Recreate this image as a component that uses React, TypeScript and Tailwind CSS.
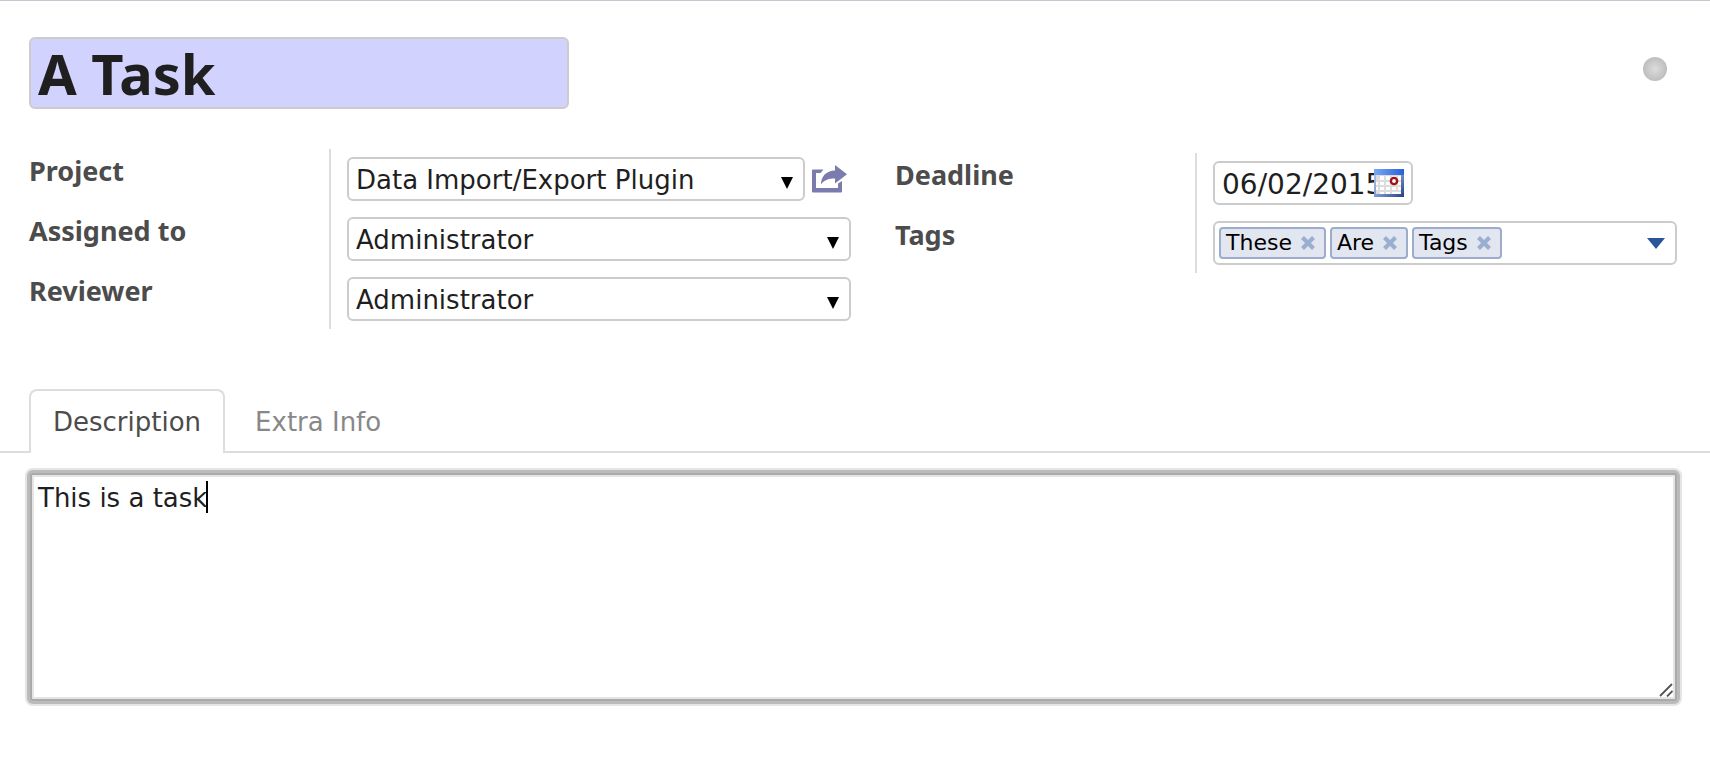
import type { ReactNode } from "react";

const FIELD = "h-11 rounded-md border-2 border-[#cccccc] bg-white leading-8 text-[#1f1f1f]";

function Row({ label, htmlFor, children }: { label: string; htmlFor: string; children: ReactNode }) {
  return (
    <div className="flex h-[60px]">
      <label
        htmlFor={htmlFor}
        className="w-[302px] shrink-0 border-r-2 border-[#dddddd] pt-1 font-['Noto_Sans',sans-serif] text-[27px] leading-9 font-bold text-[#4c4c4c]"
      >
        {label}
      </label>
      <div className="flex min-w-0 flex-1 items-center pl-4">{children}</div>
    </div>
  );
}

function Combo({ id, value }: { id: string; value: string }) {
  return (
    <div className="relative min-w-0 flex-1">
      <select id={id} className={`${FIELD} block w-full appearance-none pt-[2px] pl-[7px] text-[26px] outline-none`}>
        <option>{value}</option>
      </select>
      <svg className="pointer-events-none absolute top-5 right-3 h-3 w-3" viewBox="0 0 12 12" aria-hidden="true">
        <path d="M0 0h12L6 12z" fill="#000" />
      </svg>
    </div>
  );
}

function ShareIcon() {
  return (
    <svg className="h-7 w-9" viewBox="0 0 36 28" aria-hidden="true">
      <path d="M0 5.500Q0 4.500 1 4.500H11.500L8.500 8H4v15h22v-4.500l4-2.500v10.500q0 1-1 1H1q-1 0-1-1z" fill="#7c7bad" />
      <path d="M23 0 35 9.300 23 18.500v-5c-6 0-10.500 1-14 6C9 11.500 14 5.800 23 5.500z" fill="#7c7bad" />
    </svg>
  );
}

function CalendarIcon() {
  return (
    <svg className="h-7 w-[30px]" viewBox="0 0 30 28" aria-hidden="true">
      <defs>
        <linearGradient id="calendar-bar" x1="0" x2="1" y1="0" y2="0">
          <stop offset="0" stopColor="#77a8fb" />
          <stop offset="1" stopColor="#2b5fd8" />
        </linearGradient>
        <linearGradient id="calendar-edge" x1="0" x2="1" y1="0" y2="1">
          <stop offset="0" stopColor="#b9cbea" />
          <stop offset="0.5" stopColor="#7f9bd0" />
          <stop offset="1" stopColor="#1f3f86" />
        </linearGradient>
      </defs>
      <path d="M0 0h30v28H0z" fill="url(#calendar-edge)" />
      <path d="M2 6h25v19H2z" fill="#dcdcdc" />
      <path d="M0 0h30v6H0z" fill="url(#calendar-bar)" />
      <path
        d="M6 7h4v4H6zM12 7h4v4h-4zM18 7h4v4h-4zM24 7h3v4h-3zM2 13h2v3H2zM6 13h4v3H6zM12 13h4v3h-4zM18 13h4v3h-4zM24 13h3v3h-3zM2 18h2v3H2zM6 18h4v3H6zM12 18h4v3h-4zM18 18h4v3h-4zM24 18h3v3h-3zM6 23h4v2H6zM12 23h4v2h-4zM18 23h9v2h-9z"
        fill="#fff"
      />
      <circle cx="20" cy="12" r="3.100" fill="#fff" stroke="#a30f14" strokeWidth="2.400" />
    </svg>
  );
}

function Tag({ name }: { name: string }) {
  return (
    <span className="flex h-8 items-center gap-2 rounded-[4px] border-2 border-[#9daccc] bg-[#e2e6f0] pr-2 pl-[5px] text-[22px] leading-7 text-black">
      {name}
      <button type="button" aria-label={`Remove ${name}`} className="flex h-4 w-4 items-center justify-center">
        <svg className="h-4 w-4" viewBox="0 0 16 16" aria-hidden="true">
          <path d="M2.500 2.500l11 11M13.500 2.500l-11 11" stroke="#9aaed0" strokeWidth="4.200" />
        </svg>
      </button>
    </span>
  );
}

export default function App() {
  return (
    <main className="min-h-screen border-t border-[#c8c8d3] bg-white pb-8 font-['DejaVu_Sans',sans-serif]">
      <header className="flex items-start justify-between pt-9 pr-[43px] pl-[29px]">
        <input
          aria-label="Task title"
          defaultValue="A Task"
          className="h-[72px] w-[540px] rounded-md border-2 border-[#cccccc] bg-[#d2d2ff] px-[7px] font-['Noto_Sans',sans-serif] text-[56px] leading-[64px] font-bold text-[#1f1f1f] outline-none"
        />
        <button
          type="button"
          aria-label="Kanban state"
          className="mt-5 h-6 w-6 rounded-full bg-[radial-gradient(circle,#dcdcdc_0%,#bcbcbc_75%)]"
        />
      </header>

      <section className="mt-10 grid grid-cols-[822fr_782fr] gap-11 pr-[33px] pl-[29px]">
        <div className="min-w-0">
          <Row label="Project" htmlFor="project">
            <Combo id="project" value="Data Import/Export Plugin" />
            <button type="button" aria-label="Open project" className="flex w-[46px] pl-[7px]">
              <ShareIcon />
            </button>
          </Row>
          <Row label="Assigned to" htmlFor="assignee">
            <Combo id="assignee" value="Administrator" />
          </Row>
          <Row label="Reviewer" htmlFor="reviewer">
            <Combo id="reviewer" value="Administrator" />
          </Row>
        </div>
        <div className="min-w-0 pt-1">
          <Row label="Deadline" htmlFor="deadline">
            <div className="relative">
              <input
                id="deadline"
                defaultValue="06/02/2015"
                className={`${FIELD} block w-[200px] pt-[2px] pl-[7px] text-[28px] outline-none`}
              />
              <button type="button" aria-label="Pick a date" className="absolute top-2 right-[9px]">
                <CalendarIcon />
              </button>
            </div>
          </Row>
          <Row label="Tags" htmlFor="tags">
            <div className={`${FIELD} flex min-w-0 flex-1 items-center gap-1 px-1`}>
              <Tag name="These" />
              <Tag name="Are" />
              <Tag name="Tags" />
              <input id="tags" className="h-8 min-w-0 flex-1 outline-none" />
              <button type="button" aria-label="Show all tags" className="mr-[6px] flex">
                <svg className="h-[11px] w-[18px]" viewBox="0 0 18 11" aria-hidden="true">
                  <path d="M0 0h18L9 11z" fill="#2a5699" />
                </svg>
              </button>
            </div>
          </Row>
        </div>
      </section>

      <div role="tablist" className="mt-[60px] flex h-16 pl-[29px] shadow-[inset_0_-2px_0_#dddddd]">
        <button
          type="button"
          role="tab"
          aria-selected="true"
          className="rounded-t-lg border-2 border-b-0 border-[#dddddd] bg-white px-[22px] text-[26px] leading-8 text-[#4c4c4c]"
        >
          Description
        </button>
        <button
          type="button"
          role="tab"
          aria-selected="false"
          className="px-[30px] pt-[2px] text-[26px] leading-8 text-[#888888]"
        >
          Extra Info
        </button>
      </div>

      <div className="pt-5 pr-[33px] pl-[30px]">
        <div className="relative">
          <textarea
            aria-label="Description"
            defaultValue="This is a task"
            className="block h-[228px] w-full resize-none rounded-[3px] border-2 border-[#aaaaaa] bg-white px-[6px] pt-[5px] text-[26px] leading-9 text-[#1f1f1f] shadow-[0_0_0_3px_#bbbbbb,0_0_0_5px_#e5e5e5,inset_0_0_0_2px_#e5e5e5] outline-none"
          />
          <span className="pointer-events-none absolute top-2 left-[176px] h-8 w-[2px] bg-black" />
          <svg
            className="pointer-events-none absolute right-1 bottom-1 h-[14px] w-[14px]"
            viewBox="0 0 14 14"
            aria-hidden="true"
          >
            <path d="M1 13 13 1M8 13.500l5.500-5.500" stroke="#555" strokeWidth="1.800" />
          </svg>
        </div>
      </div>
    </main>
  );
}
